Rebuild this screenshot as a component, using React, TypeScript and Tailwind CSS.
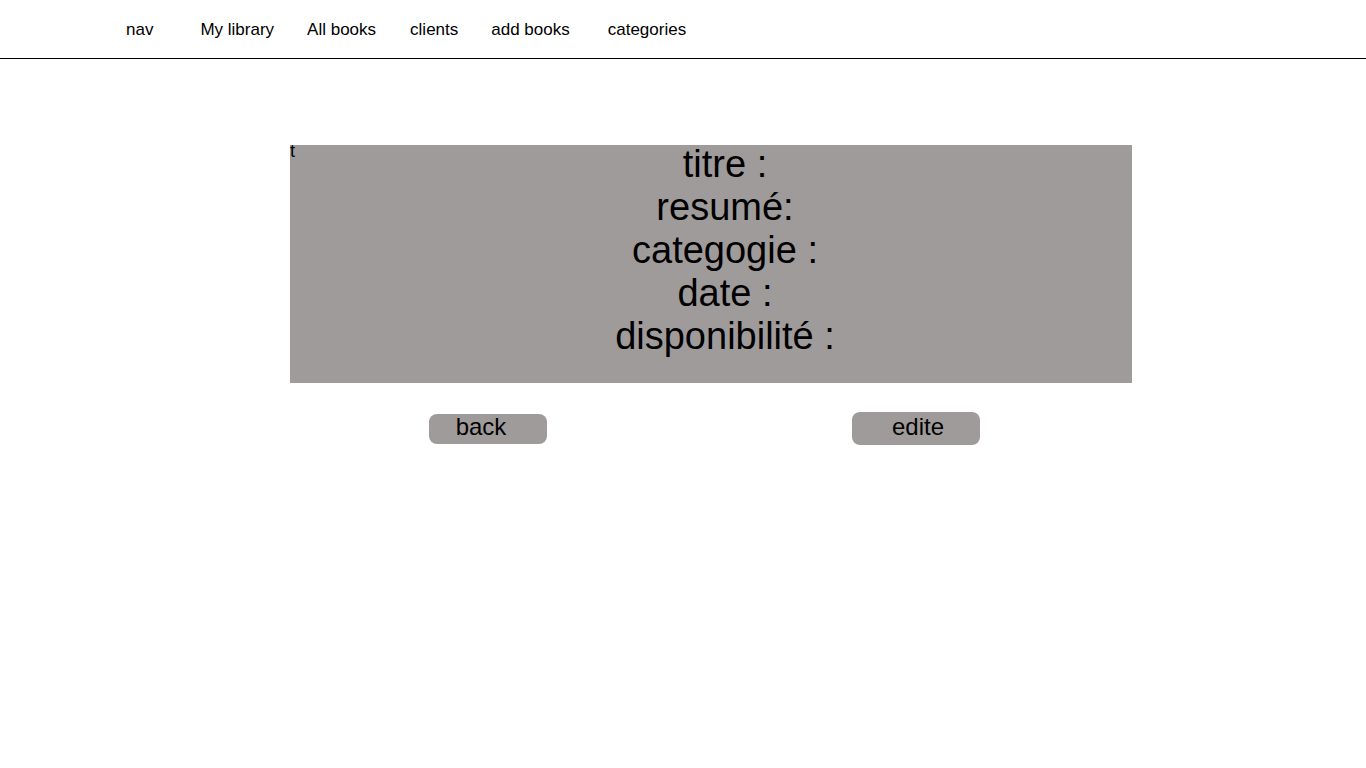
import React from 'react';

const navItems = [
  { label: 'nav', cls: 'ml-[126px]' },
  { label: 'My library', cls: 'ml-[47px]' },
  { label: 'All books', cls: 'ml-[33px]' },
  { label: 'clients', cls: 'ml-[34px]' },
  { label: 'add books', cls: 'ml-[33px]' },
  { label: 'categories', cls: 'ml-[38px]' },
];

const fields = ['titre :', 'resumé:', 'categogie :', 'date :', 'disponibilité :'];

export default function App() {
  return (
    <div className="min-h-screen bg-white text-black font-['Liberation_Sans',Arial,sans-serif]">
      {/* barre de navigation */}
      <header className="h-[59px] border-b border-black flex items-center">
        {navItems.map((item) => (
          <a key={item.label} className={`${item.cls} text-[17px] leading-none cursor-pointer`}>
            {item.label}
          </a>
        ))}
      </header>

      {/* fiche du livre */}
      <main className="pt-[86px]">
        <div className="relative ml-[290px] w-[842px] h-[238px] bg-[#a09b9b]">
          <span className="absolute left-0 -top-[5px] text-[18px] leading-[22px]">t</span>
          <div className="relative -top-[2px] pl-[28px] flex flex-col items-center text-[38px] leading-[43px]">
            {fields.map((f) => (
              <div key={f}>{f}</div>
            ))}
          </div>
        </div>

        <div className="flex items-center mt-[29px] ml-[429px]">
          <button className="w-[118px] h-[30px] rounded-[8px] bg-[#a09b9b] text-[24px] leading-none pr-[14px] pb-[4px]">
            back
          </button>
          <button className="ml-[305px] w-[128px] h-[33px] rounded-[8px] bg-[#a09b9b] text-[24px] leading-none pb-[4px] pl-[4px]">
            edite
          </button>
        </div>
      </main>
    </div>
  );
}
